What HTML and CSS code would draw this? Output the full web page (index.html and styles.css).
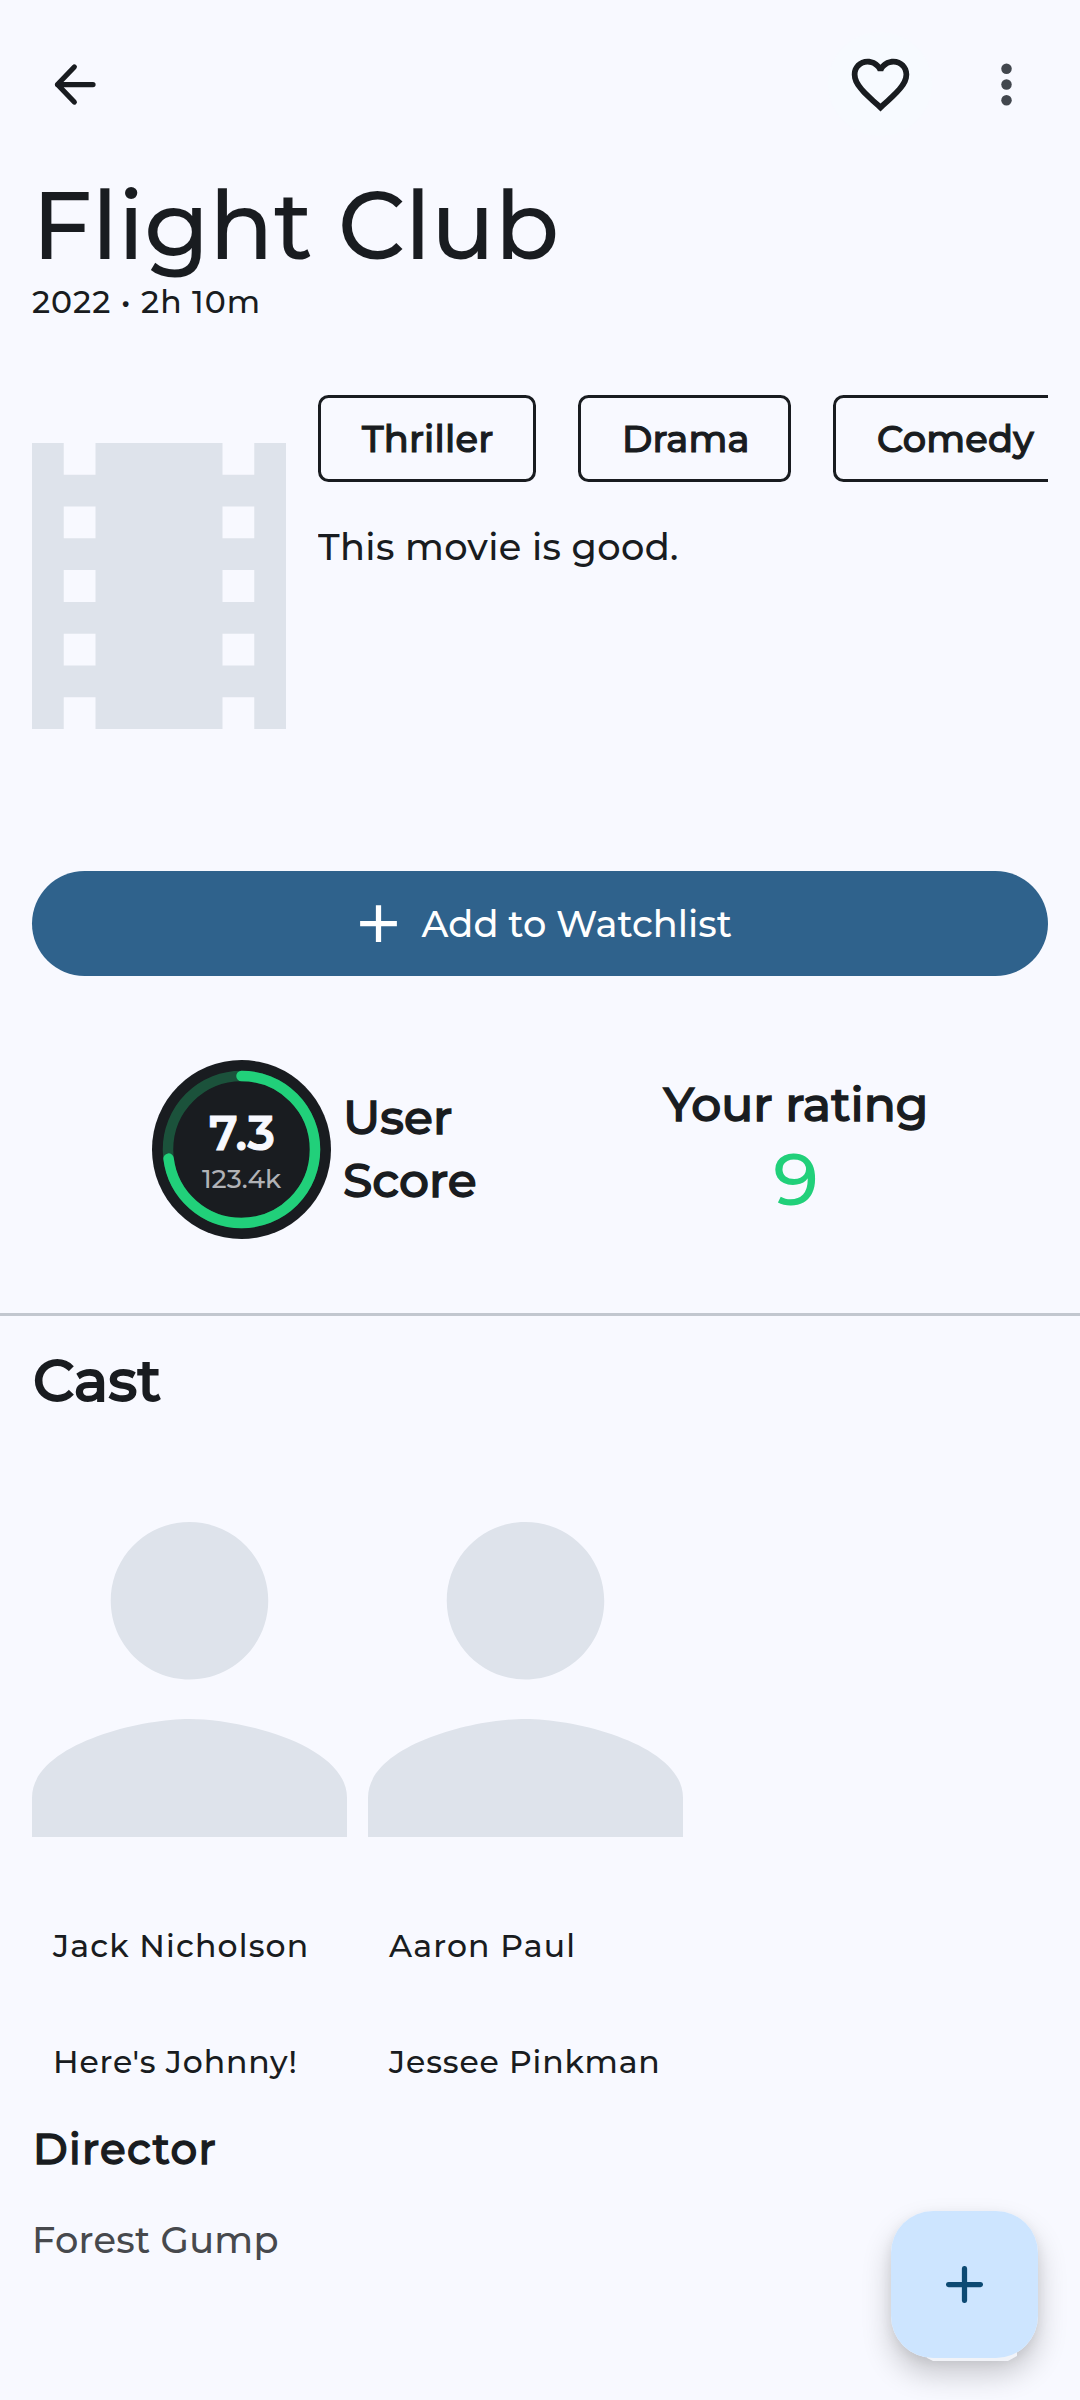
FILE: index.html
```
<!DOCTYPE html>
<html lang="en">
<head>
<meta charset="utf-8">
<title>Flight Club</title>
<link rel="stylesheet" href="styles.css">
</head>
<body>
<main class="screen">
  <header class="topbar">
    <svg class="icon-back" viewBox="0 0 63 63" aria-label="Back"><path d="M51 31.5H15.5M32.3 14 15.5 31.5 32.3 49"/></svg>
    <div class="actions">
      <div class="like"><svg class="icon-heart" viewBox="0 0 24 24" aria-label="Favorite"><path d="M16.5 3c-1.74 0-3.41.81-4.5 2.09C10.91 3.81 9.24 3 7.5 3 4.42 3 2 5.42 2 8.5c0 3.78 3.4 6.86 8.55 11.54L12 21.35l1.45-1.32C18.6 15.36 22 12.28 22 8.5 22 5.42 19.58 3 16.5 3zm-4.4 15.55-.1.1-.1-.1C7.14 14.24 4 11.39 4 8.5 4 6.5 5.5 5 7.5 5c1.54 0 3.04.99 3.57 2.36h1.87C13.46 5.99 14.96 5 16.5 5c2 0 3.5 1.5 3.5 3.5 0 2.89-3.14 5.74-7.9 10.05z"/></svg></div>
      <svg class="icon-more" viewBox="0 0 24 24" aria-label="More"><circle cx="12" cy="6" r="2"/><circle cx="12" cy="12" r="2"/><circle cx="12" cy="18" r="2"/></svg>
    </div>
  </header>

  <section class="heading">
    <h1 class="title">Flight Club</h1>
    <p class="meta">2022 • 2h 10m</p>
  </section>

  <section class="overview">
    <div class="poster">
      <svg class="poster-art" viewBox="0 0 8 9" preserveAspectRatio="none"><path fill-rule="evenodd" d="M0 0h1v1h1V0h4v1h1V0h1v9H7V8H6v1H2V8H1v1H0zM1 2v1h1V2zM1 4v1h1V4zM1 6v1h1V6zM6 2v1h1V2zM6 4v1h1V4zM6 6v1h1V6z"/></svg>
    </div>
    <div class="details">
      <div class="chips">
        <span class="chip chip-thriller">Thriller</span>
        <span class="chip chip-drama">Drama</span>
        <span class="chip">Comedy</span>
      </div>
      <p class="plot">This movie is good.</p>
    </div>
  </section>

  <button class="watchlist" type="button">
    <svg class="icon-add" viewBox="0 0 24 24"><path d="M19 13h-6v6h-2v-6H5v-2h6V5h2v6h6z"/></svg>
    <span>Add to Watchlist</span>
  </button>

  <section class="scores">
    <div class="user-score">
      <div class="gauge">
        <svg class="gauge-ring" viewBox="0 0 179 179">
          <circle class="gauge-disc" cx="89.5" cy="89.5" r="89.5"/>
          <circle class="gauge-track" cx="89.5" cy="89.5" r="73.5"/>
          <circle class="gauge-value" cx="89.5" cy="89.5" r="73.5" pathLength="100" stroke-dasharray="73 100" transform="rotate(-90 89.5 89.5)"/>
        </svg>
        <div class="gauge-text">
          <span class="gauge-score">7.3</span>
          <span class="gauge-votes">123.4k</span>
        </div>
      </div>
      <p class="label">User<br>Score</p>
    </div>
    <div class="own-score">
      <p class="label">Your rating</p>
      <p class="own-value">9</p>
    </div>
  </section>

  <section class="cast">
    <h2 class="cast-title">Cast</h2>
    <div class="people">
      <article class="person">
        <svg class="avatar" viewBox="4 4 16 16"><path d="M12 12c2.21 0 4-1.79 4-4s-1.79-4-4-4-4 1.79-4 4 1.79 4 4 4zm0 2c-2.67 0-8 1.34-8 4v2h16v-2c0-2.66-5.33-4-8-4z"/></svg>
        <p class="name">Jack Nicholson</p>
        <p class="role">Here's Johnny!</p>
      </article>
      <article class="person">
        <svg class="avatar" viewBox="4 4 16 16"><path d="M12 12c2.21 0 4-1.79 4-4s-1.79-4-4-4-4 1.79-4 4 1.79 4 4 4zm0 2c-2.67 0-8 1.34-8 4v2h16v-2c0-2.66-5.33-4-8-4z"/></svg>
        <p class="name">Aaron Paul</p>
        <p class="role">Jessee Pinkman</p>
      </article>
    </div>
    <h3 class="director-title">Director</h3>
    <p class="director-name">Forest Gump</p>
  </section>

  <button class="fab" type="button" aria-label="Add">
    <svg class="fab-edge" viewBox="0 0 90 10"><path d="M0 0h90v5l-9 5H6L0 7z"/></svg>
    <span class="fab-face"><svg class="fab-icon" viewBox="0 0 37 37"><path d="M18.5 2.6v31.8M2.6 18.5h31.8"/></svg></span>
  </button>
</main>
</body>
</html>
```
FILE: styles.css
```
* { box-sizing: border-box; margin: 0; padding: 0; }

body {
  background: #f8f9ff;
  color: #191c20;
  font-family: Montserrat, Inter, sans-serif;
  font-weight: 500;
}

svg { display: block; }
button { border: 0; font: inherit; }

.screen {
  position: relative;
  width: 1080px;
  height: 2400px;
  overflow: hidden;
}

/* Top bar */
.topbar {
  display: flex;
  justify-content: space-between;
  height: 168px;
  padding: 21px 42px 0;
}
.icon-back {
  width: 63px;
  height: 63px;
  margin-top: 32px;
  fill: none;
  stroke: #191c20;
  stroke-width: 5.25;
  stroke-linecap: round;
  stroke-linejoin: round;
}
.actions { display: flex; }
.like {
  display: flex;
  justify-content: center;
  width: 104px;
  height: 104px;
  margin: 11px 43px 0 0;
  padding-top: 18px;
  border-radius: 50%;
  background: #f7faff;
}
.icon-heart { width: 69px; height: 69px; fill: #191c20; }
.icon-more { width: 63px; height: 63px; margin-top: 32px; fill: #42474e; }

/* Title */
.heading { padding: 0 32px; }
.title {
  font-size: 94.5px;
  line-height: 116px;
  font-weight: 500;
  letter-spacing: -.17px;
}
.meta { margin-top: -2px; font-size: 31.5px; line-height: 40px; letter-spacing: 1px; }

/* Overview */
.overview {
  display: flex;
  gap: 32px;
  height: 381px;
  margin: 73px 32px 0;
}
.poster { display: flex; align-items: center; flex: 0 0 254px; }
.poster-art { width: 254px; height: 286px; fill: #dee3eb; }
.details { flex: 1; min-width: 0; overflow: hidden; }
.chips { display: flex; gap: 42px; }
.chip {
  flex: none;
  padding: 0 41px;
  border: 3px solid #191c20;
  border-radius: 10.5px;
  font-size: 36.75px;
  line-height: 81px;
  letter-spacing: .22px;
  white-space: nowrap;
  -webkit-text-stroke: 1.15px;
}
.chip-thriller { width: 218px; }
.chip-drama { width: 213px; }
.plot { margin-top: 39px; font-size: 36.75px; line-height: 52px; letter-spacing: .36px; }

/* Watchlist button */
.watchlist {
  display: flex;
  align-items: center;
  justify-content: center;
  gap: 11.5px;
  width: 1016px;
  height: 105px;
  margin: 95px 32px 0;
  padding-right: 1px;
  border-radius: 52.5px;
  background: #2f628c;
  color: #fff;
  font-size: 36.75px;
}
.icon-add { width: 63px; height: 63px; fill: #fff; }

/* Scores */
.scores {
  display: grid;
  grid-template-columns: 508px 508px;
  height: 340px;
  padding: 0 32px;
  border-bottom: 3px solid #c2c7cf;
}
.user-score {
  display: flex;
  align-items: flex-start;
  gap: 12px;
  padding: 84px 0 0 120px;
}
.gauge { display: grid; width: 179px; height: 179px; }
.gauge-ring, .gauge-text { grid-area: 1 / 1; }
.gauge-disc { fill: #191c20; }
.gauge-track, .gauge-value { fill: none; stroke-width: 10.5; stroke: #21d07a; }
.gauge-track { stroke-opacity: .3; }
.gauge-value { stroke-linecap: round; }
.gauge-text {
  display: flex;
  flex-direction: column;
  align-items: center;
  padding-top: 43px;
  white-space: nowrap;
}
.gauge-score {
  padding-left: 1px;
  color: #f8f9ff;
  font-size: 47.25px;
  line-height: 60px;
  font-weight: 600;
  -webkit-text-stroke: .9px;
}
.gauge-votes {
  color: #b0b2b6;
  font-size: 26.25px;
  line-height: 32px;
}
.label { font-size: 47.25px; line-height: 63px; -webkit-text-stroke: 1.4px; }
.user-score .label { margin-top: 26px; }
.own-score { padding: 97px 0 0 4px; text-align: center; }
.own-value { color: #21d07a; font-size: 73.5px; line-height: 86px; }

/* Cast */
.cast { padding: 27px 32px 0; }
.cast-title {
  padding-left: 1px;
  font-size: 57.75px;
  line-height: 74px;
  font-weight: 500;
  -webkit-text-stroke: 1.8px;
}
.people { display: flex; gap: 21px; margin-top: 105px; }
.person { width: 315px; }
.avatar { width: 315px; height: 315px; fill: #dee3eb; }
.name, .role {
  padding-left: 21px;
  font-size: 31.5px;
  line-height: 42px;
  letter-spacing: 1.15px;
  white-space: nowrap;
}
.name { margin-top: 88px; }
.role { margin-top: 74px; letter-spacing: .85px; }
.director-title {
  margin-top: 35px;
  padding-left: 1px;
  font-size: 42px;
  line-height: 63px;
  font-weight: 500;
  letter-spacing: 1.3px;
  -webkit-text-stroke: 1.3px;
}
.director-name {
  margin-top: 33px;
  color: #47494d;
  font-size: 36.75px;
  line-height: 52px;
  letter-spacing: .26px;
}

/* Floating action button, over the page content */
.fab {
  position: absolute;
  right: 42px;
  bottom: 42px;
  width: 147px;
  height: 147px;
  border-radius: 42px;
  background: none;
  box-shadow: 0 16px 30px rgba(0, 0, 0, .2), 0 4px 12px rgba(0, 0, 0, .07);
}
.fab-edge {
  position: absolute;
  left: 36px;
  top: 140px;
  width: 90px;
  height: 10px;
  fill: #f1f3f8;
}
.fab-face {
  position: relative;
  display: grid;
  place-items: center;
  height: 147px;
  border-radius: 42px;
  background: #cde5ff;
}
.fab-icon {
  width: 37px;
  height: 37px;
  fill: none;
  stroke: #0d4a73;
  stroke-width: 5.25;
  stroke-linecap: round;
}
```
